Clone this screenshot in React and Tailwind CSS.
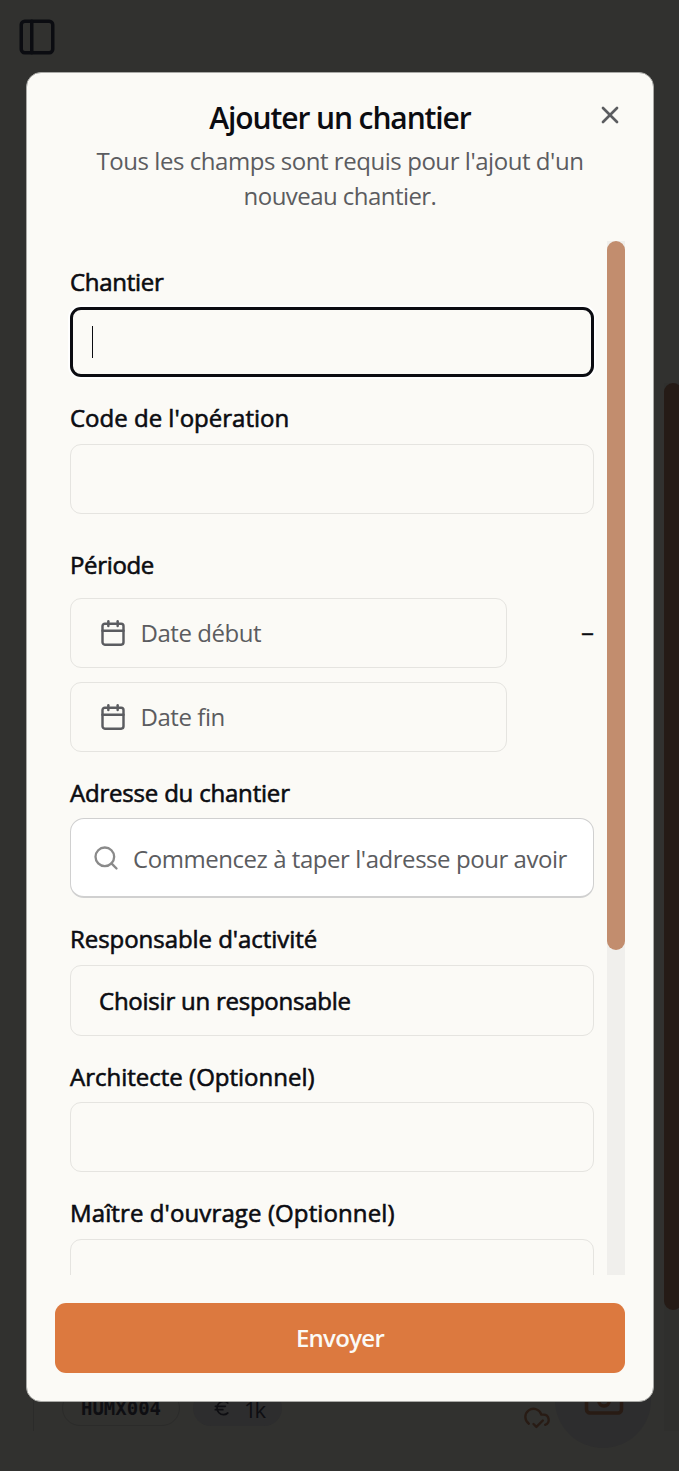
import React from "react";
import { PanelLeft, X, Calendar, Search, CloudCheck, Camera, Euro } from "lucide-react";

const Label = ({ children, className = "" }) => (
  <label
    className={`block h-9 leading-9 text-[24px] whitespace-nowrap [-webkit-text-stroke:0.6px_#0b0c11] ${className}`}
  >
    {children}
  </label>
);

const Input = ({ className = "" }) => (
  <div className={`h-[70px] w-full rounded-[11px] border border-[#e5e4e0] ${className}`} />
);

const DateButton = ({ children }) => (
  <button
    type="button"
    className="flex h-[70px] w-[437px] items-center rounded-[11px] border border-[#e5e4e0] pl-7 text-[24px] tracking-[-0.45px] text-[#5b5c60]"
  >
    <Calendar size={28} strokeWidth={2.1} className="mr-[13.5px]" />
    {children}
  </button>
);

/* Page hidden behind the overlay */
const Background = () => (
  <div className="flex h-full">
    <div className="flex flex-1 flex-col justify-between">
      <div className="pt-4 pl-4">
        <PanelLeft size={42} className="text-[#0b0c11]" />
      </div>
      <div className="ml-[33px] mb-[23px] flex h-[80px] items-end">
        <div className="mb-[17px] flex h-full w-px bg-[#2b2b2a]" />
        <div className="mb-[22px] ml-7 flex h-9 w-[118px] items-center justify-center rounded-full border border-[#2b2b2a] font-['DejaVu_Sans_Mono'] text-[19px] font-bold text-[#0e0e12]">
          HUMX004
        </div>
        <div className="mb-[22px] ml-[13px] flex h-9 w-[89px] items-center rounded-full bg-[#2d2d2e] pl-[19px] text-[22px] text-[#0e0e12]">
          <Euro size={20} className="mr-3" />
          <span className="pt-0.5 tracking-[-2px]">1k</span>
        </div>
        <CloudCheck size={28} className="mb-[17px] ml-[241px] text-[#281b14]" />
        <div className="ml-1 flex size-24 shrink-0 items-center justify-center rounded-full bg-[#2d2d2e] pb-[3px] pl-0.5 text-[#281b14]">
          <Camera size={42} />
        </div>
      </div>
    </div>
    <div className="mt-[383px] h-[1048px] w-[15px] bg-[#2f2f2d]">
      <div className="h-[927px] w-[18px] rounded-full bg-[#251b16]" />
    </div>
  </div>
);

const App = () => (
  <div className="relative h-[1471px] w-[679px] overflow-hidden bg-[#31312f] font-['Open_Sans',sans-serif] text-[#0b0c11]">
    <Background />

    {/* Dialog */}
    <div className="absolute top-[72px] left-[26px] flex h-[1330px] w-[628px] flex-col rounded-[15px] border border-[#a9a9a6] bg-[#fbfaf6] px-7 pb-7">
      <div className="pt-6 text-center">
        <h2 className="h-[46px] leading-[42px] text-[30px] font-semibold tracking-[-1.1px]">
          Ajouter un chantier
        </h2>
        <p className="text-[24px] leading-[35px] tracking-[-0.45px] text-[#5b5c60]">
          Tous les champs sont requis pour l'ajout d'un
          <br />
          <span className="tracking-[-0.55px]">nouveau chantier.</span>
        </p>
      </div>
      <button type="button" className="absolute top-[28px] right-[29px] text-[#5b5c60]">
        <X size={28} strokeWidth={2.3} />
      </button>

      <div className="mt-[28px] flex h-[1034px] overflow-hidden">
        <form className="ml-[15px] w-[524px] shrink-0 pt-[23px]">
          <Label className="tracking-[-0.3px]">Chantier</Label>
          <div className="mt-[7px] flex h-[70px] items-center rounded-[11px] border-[3px] border-[#0b0c11] pl-[19px] shadow-[0_0_0_2px_#fff]">
            <div className="h-8 w-px bg-[#0b0c11]" />
          </div>

          <Label className="mt-[23px]">Code de l'opération</Label>
          <Input className="mt-2" />

          <Label className="mt-[33px] tracking-[-0.35px]">Période</Label>
          <div className="mt-[15px] flex flex-wrap items-center justify-between gap-y-3.5">
            <DateButton>Date début</DateButton>
            <span className="pb-[5px] text-[26px] leading-8 [-webkit-text-stroke:0.3px_#0b0c11]">
              –
            </span>
            <DateButton>Date fin</DateButton>
          </div>

          <Label className="mt-[23px] tracking-[-0.2px]">Adresse du chantier</Label>
          <div className="mt-[7px] flex h-20 items-center rounded-[14px] border border-b-2 border-[#d0d0d0] bg-white pl-[21px] text-[24px] whitespace-nowrap text-[#5b5c60]">
            <Search size={28} className="mr-[13px] text-[#8a8a8a]" />
            <span className="pt-0.5 tracking-[-0.45px]">
              Commencez à taper l'adresse pour avoir
            </span>
          </div>

          <Label className="mt-[23px] tracking-[-0.05px]">Responsable d'activité</Label>
          <button
            type="button"
            className="mt-2 flex h-[71px] w-full items-center rounded-[11px] border border-[#e5e4e0] pl-7 text-[24px] tracking-[-0.24px] [-webkit-text-stroke:0.6px_#0b0c11]"
          >
            Choisir un responsable
          </button>

          <Label className="mt-[23px]">Architecte (Optionnel)</Label>
          <Input className="mt-[7px]" />

          <Label className="mt-[23px] tracking-[0.11px]">Maître d'ouvrage (Optionnel)</Label>
          <Input className="mt-2" />
        </form>
        <div className="ml-[13px] h-full w-[18px] bg-[#f0efec]">
          <div className="h-[709px] rounded-full bg-[#c28d6e]" />
        </div>
      </div>

      <button
        type="submit"
        className="mt-7 h-[70px] w-full shrink-0 rounded-[11px] bg-[#dc793f] text-[24px] font-semibold tracking-[-0.7px] text-[#fbfaf6]"
      >
        Envoyer
      </button>
    </div>
  </div>
);

export default App;
